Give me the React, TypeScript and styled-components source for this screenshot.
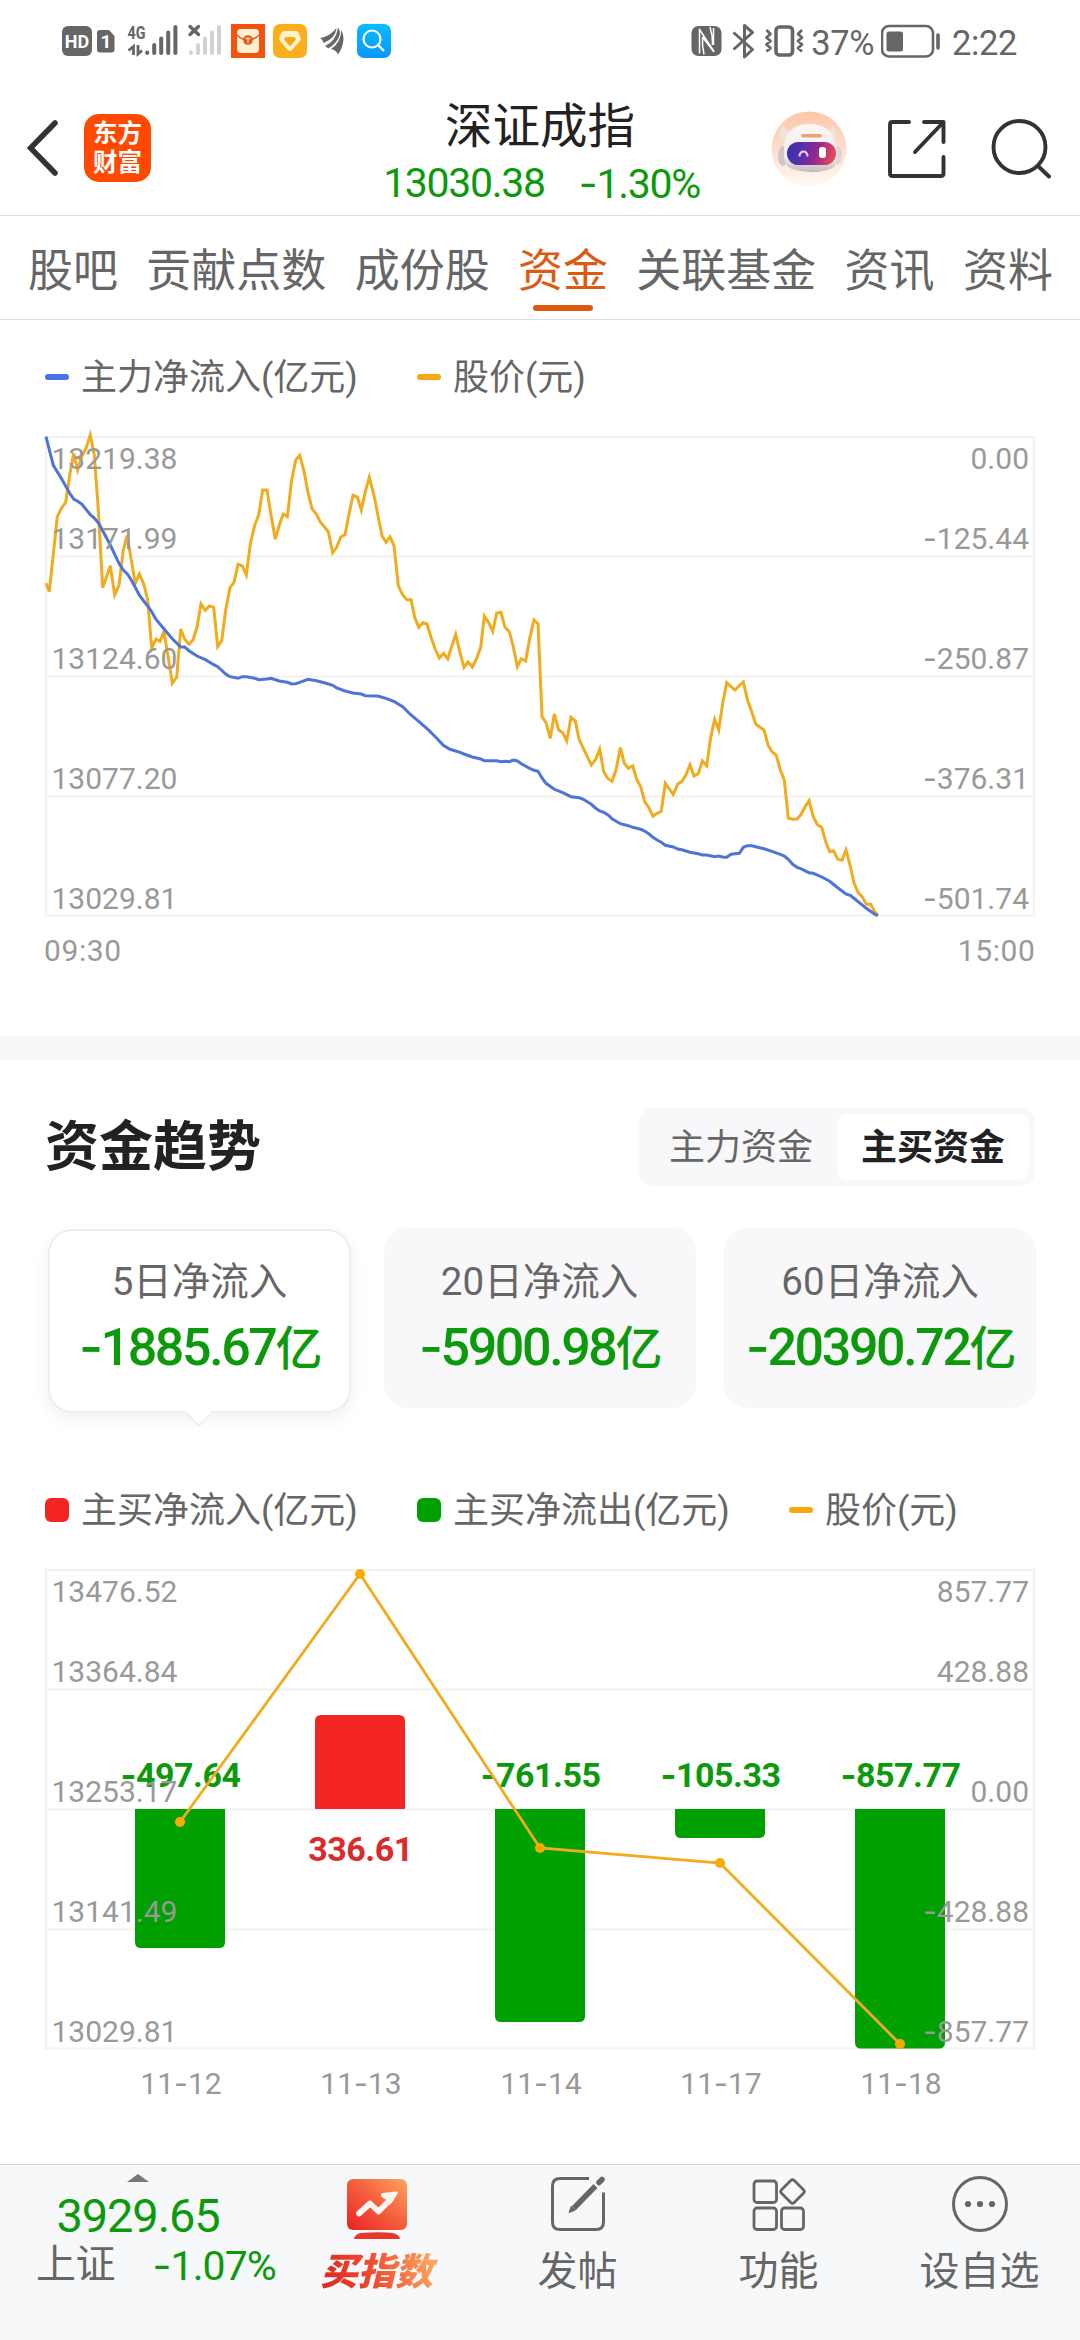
import React from 'react';
import styled, { createGlobalStyle } from 'styled-components';

const FONT = `Roboto, 'Noto Sans CJK SC', sans-serif`;

const GlobalStyle = createGlobalStyle`
  html, body { margin: 0; padding: 0; background: #fff; }
  body { font-family: ${FONT}; -webkit-font-smoothing: antialiased; }
  * { box-sizing: border-box; }
  svg { display: block; flex: none; }
`;

const GREEN = '#0c9a0c';
const GRAY = '#666';

const Page = styled.div`
  width: 1080px;
  height: 2340px;
  display: flex;
  flex-direction: column;
  background: #fff;
  overflow: hidden;
`;

/* ---------- status bar ---------- */

const StatusBar = styled.div`
  height: 82px;
  flex: none;
  display: flex;
  justify-content: space-between;
  padding: 0 63px 0 62px;
  color: ${GRAY};
`;

const StatusGroup = styled.div`
  display: flex;
  align-items: center;
`;

const StatusText = styled.span<{ $left: number; $right: number }>`
  font-size: 34.5px;
  line-height: 40px;
  letter-spacing: -0.4px;
  margin: 3px ${p => p.$right}px 0 ${p => p.$left}px;
`;

/* ---------- header ---------- */

const Header = styled.header`
  height: 134px;
  flex: none;
  display: grid;
  grid-template-columns: 1fr auto 1fr;
  border-bottom: 1px solid #d9d9d9;
`;

const HeaderLeft = styled.div`
  display: flex;
  align-items: center;
  gap: 26px;
  padding: 0 0 0 27px;
  height: 132px;
`;

const HeaderRight = styled.div`
  display: flex;
  align-items: center;
  justify-content: flex-end;
  height: 133px;
  padding-right: 29px;
`;

const Spacer = styled.div<{ $w?: number; $h?: number }>`
  width: ${p => p.$w ?? 0}px;
  height: ${p => p.$h ?? 0}px;
  flex: none;
`;

const Logo = styled.div`
  width: 67px;
  height: 68px;
  border-radius: 15px;
  background: #ff4800;
  color: #fff;
  display: flex;
  flex-direction: column;
  justify-content: center;
  align-items: center;
  font-size: 24.5px;
  font-weight: 700;
  line-height: 29px;
`;

const Quote = styled.div`
  display: flex;
  flex-direction: column;
  align-items: center;
  padding-top: 15px;
`;

const QuoteName = styled.h1`
  margin: 0;
  font-size: 47.5px;
  font-weight: 400;
  line-height: 60px;
  color: #222;
`;

const QuoteFigures = styled.div`
  display: flex;
  gap: 34px;
  padding-left: 3px;
  font-size: 41px;
  line-height: 52px;
  letter-spacing: -1.3px;
  color: ${GREEN};
`;

const Dash = styled.span`
  font-family: Inter, sans-serif;
`;

/* ---------- tabs ---------- */

const Tabs = styled.nav`
  height: 104px;
  flex: none;
  display: flex;
  gap: 28.3px;
  padding-left: 28px;
  border-bottom: 1px solid #d9d9d9;
`;

const Tab = styled.span<{ $active?: boolean }>`
  display: flex;
  flex-direction: column;
  align-items: center;
  padding-top: 26px;
  font-size: 45px;
  line-height: 60px;
  white-space: nowrap;
  color: ${p => (p.$active ? '#dc5a12' : GRAY)};
`;

const TabMark = styled.i`
  width: 60px;
  height: 6px;
  margin-top: 3px;
  border-radius: 3px;
  background: #dc5a12;
`;

/* ---------- legends ---------- */

const Legend = styled.div<{ $top: number; $bottom: number }>`
  flex: none;
  display: flex;
  padding: ${p => p.$top}px 0 ${p => p.$bottom}px 45px;
  height: ${p => p.$top + p.$bottom + 48}px;
`;

const LegendItem = styled.div<{ $w?: number }>`
  width: ${p => (p.$w ? p.$w + 'px' : 'auto')};
  display: flex;
  align-items: center;
  gap: 12px;
  font-size: 36px;
  line-height: 48px;
  color: ${GRAY};
  white-space: nowrap;
`;

const LegendMark = styled.i<{ $color: string; $square?: boolean }>`
  width: 24px;
  height: ${p => (p.$square ? 24 : 6)}px;
  margin-top: -2px;
  border-radius: ${p => (p.$square ? 6 : 3)}px;
  background: ${p => p.$color};
`;

const Divider = styled.div`
  height: 24px;
  flex: none;
  background: #f7f8fa;
`;

/* ---------- charts ---------- */

const Chart = styled.svg`
  text {
    font-family: ${FONT};
    font-size: 30px;
    fill: #999;
  }
  text.time {
    letter-spacing: 0.6px;
  }
  text.value {
    font-size: 34px;
    font-weight: 700;
    letter-spacing: -0.5px;
  }
  text tspan.dash {
    font-family: Inter, sans-serif;
  }
`;

/* ---------- trend section ---------- */

const SectionHead = styled.div`
  height: 78px;
  flex: none;
  margin: 48px 45px 0 45px;
  display: flex;
  align-items: center;
  justify-content: space-between;
`;

const SectionTitle = styled.h2`
  margin: 1px 0 0;
  font-size: 54px;
  font-weight: 700;
  line-height: 70px;
  color: #222;
`;

const Segmented = styled.div`
  width: 396px;
  height: 78px;
  padding: 6px;
  display: flex;
  border-radius: 14px;
  background: #f8f8fb;
`;

const Segment = styled.span<{ $active?: boolean }>`
  flex: 1;
  display: flex;
  align-items: center;
  justify-content: center;
  padding-top: 2px;
  border-radius: 10px;
  font-size: 36px;
  line-height: 48px;
  font-weight: ${p => (p.$active ? 700 : 400)};
  color: ${p => (p.$active ? '#222' : GRAY)};
  background: ${p => (p.$active ? '#fff' : 'transparent')};
`;

const Cards = styled.div`
  flex: none;
  height: 215px;
  margin: 42px 44px 0 45px;
  display: flex;
  justify-content: space-between;
  align-items: flex-start;
`;

const Card = styled.div<{ $active?: boolean }>`
  position: relative;
  width: ${p => (p.$active ? 303 : 312)}px;
  height: ${p => (p.$active ? 184 : 180)}px;
  margin: ${p => (p.$active ? '1px 4px 0 3px' : '0')};
  border: ${p => (p.$active ? '2px solid #eee' : '0 solid transparent')};
  border-radius: 24px;
  background: ${p => (p.$active ? '#fff' : '#f8f8fb')};
  box-shadow: ${p => (p.$active ? '0 6px 18px rgba(0, 0, 0, 0.06)' : 'none')};
  display: flex;
  flex-direction: column;
  align-items: center;
  padding-top: ${p => (p.$active ? 27 : 30)}px;
`;

const CardLabel = styled.span`
  font-size: 38.5px;
  line-height: 48px;
  color: ${GRAY};
`;

const CardValue = styled.span`
  margin-top: 11px;
  font-size: 52px;
  line-height: 60px;
  font-weight: 500;
  letter-spacing: -2.4px;
  color: ${GREEN};
  white-space: nowrap;
`;

const CardUnit = styled.span`
  font-size: 47px;
`;

const Pointer = styled.i`
  position: absolute;
  left: 50%;
  bottom: -12px;
  width: 20px;
  height: 20px;
  margin-left: -11px;
  background: #fff;
  border: solid #eee;
  border-width: 0 2px 2px 0;
  transform: rotate(45deg);
`;

/* ---------- bottom bar ---------- */

const BottomBar = styled.footer`
  margin-top: auto;
  height: 176px;
  flex: none;
  display: flex;
  background: #f7f8fa;
  border-top: 1px solid #d5d3dc;
  color: ${GRAY};
`;

const IndexBox = styled.div`
  width: 276px;
  display: flex;
  flex-direction: column;
  align-items: center;
  padding: 9px 0 0 0;
`;

const IndexValue = styled.span`
  margin-top: 7px;
  font-size: 47px;
  line-height: 54px;
  letter-spacing: -1.1px;
  color: ${GREEN};
`;

const IndexRow = styled.div`
  align-self: stretch;
  display: flex;
  justify-content: space-between;
  padding: 0 0 0 36px;
  margin-top: -2px;
  font-size: 40px;
  line-height: 48px;
  letter-spacing: -0.5px;
`;

const IndexChange = styled.span`
  color: ${GREEN};
  font-size: 41px;
  letter-spacing: -0.9px;
`;

const NavItem = styled.div`
  width: 201px;
  display: flex;
  flex-direction: column;
  align-items: center;
  padding-top: 9px;
`;

const NavText = styled.span`
  margin-top: 16px;
  font-size: 40px;
  line-height: 48px;
`;

const BuyText = styled.span`
  margin-top: 7px;
  padding: 0 6px;
  font-size: 37.5px;
  line-height: 50px;
  font-weight: 900;
  font-style: italic;
  background: linear-gradient(75deg, #e0251f 8%, #f0472f 45%, #fba45c 92%);
  -webkit-background-clip: text;
  background-clip: text;
  color: transparent;
`;

/* ---------- data ---------- */

/* Intraday samples as x,y pairs in thirds of a pixel from the plot origin. */
const priceAm = [48,490,58,515,82,290,95,263,107,247,120,160,131,100,143,150,157,105,168,85,181,45,193,105,205,270,218,503,241,437,254,525,267,495,280,390,291,347,303,415,316,490,328,462,341,492,353,540,365,685,378,657,390,664,402,635,415,715,427,790,440,772,452,627,464,658,477,673,489,660,501,622,513,552,526,571,538,558,551,562,563,680,575,662,587,570,600,503,612,487,624,433,637,438,649,465,661,372,674,316,686,285,698,210,711,210,723,285,736,358,748,315,760,282,772,290,785,180,797,120,809,106,822,153,834,218,846,266,859,282,871,306,883,320,895,335,908,398,920,382,932,351,945,344,957,283,969,226,982,231,994,270,1006,215,1018,172,1031,222,1043,283,1056,347,1068,367,1080,350,1092,377,1105,497,1117,523,1130,539,1143,539,1154,592,1166,622,1179,608,1191,612,1204,655,1216,688,1228,714,1241,700,1253,717];
const pricePm = [0,695,17,643,30,698,42,742,54,726,67,741,79,718,92,682,103,588,116,608,128,634,140,579,153,577,165,622,178,635,190,680,202,740,214,716,227,723,239,655,252,600,264,611,276,890,288,908,301,955,313,882,326,930,338,938,350,963,363,892,376,903,387,957,400,985,412,1010,424,1035,437,1018,449,988,461,1055,474,1076,486,1084,498,1050,511,983,523,1030,535,1045,548,1038,560,1078,572,1100,584,1145,597,1164,609,1189,621,1180,634,1174,646,1090,658,1107,670,1124,683,1092,696,1084,708,1064,720,1034,732,1068,745,1061,757,1023,770,1037,782,952,794,898,806,930,818,850,830,788,843,800,855,810,868,797,880,786,893,842,905,875,917,912,929,921,942,930,954,975,966,995,979,1006,991,1050,1003,1080,1015,1195,1028,1198,1041,1197,1052,1185,1065,1161,1077,1142,1090,1190,1102,1214,1115,1222,1127,1265,1139,1295,1151,1292,1163,1318,1176,1321,1188,1290,1200,1335,1213,1392,1225,1418,1237,1431,1249,1453,1262,1453,1274,1475,1284,1486];
const flowAm = [48,50,70,136,95,177,119,220,131,237,143,244,156,253,181,284,193,294,206,310,218,332,241,375,267,430,279,449,292,462,304,480,328,525,341,543,353,558,365,575,377,597,402,627,427,656,452,681,464,681,477,692,501,708,526,719,551,734,563,740,587,762,600,770,624,775,637,770,649,770,674,775,686,779,711,777,723,775,748,783,772,787,785,792,797,791,809,787,834,778,859,782,883,788,908,796,920,804,945,813,969,819,994,822,1006,827,1043,828,1068,835,1093,845,1118,860,1142,884,1167,905,1191,926,1216,950,1240,976];
const flowPm = [0,988,30,997,42,1002,67,1011,92,1017,103,1022,140,1022,153,1025,165,1024,178,1025,190,1020,202,1023,214,1031,239,1045,252,1051,264,1054,276,1074,288,1090,313,1108,338,1118,363,1130,388,1133,400,1138,424,1153,437,1165,449,1173,461,1177,474,1185,486,1196,511,1211,535,1217,548,1222,572,1228,584,1233,597,1242,609,1252,621,1260,634,1267,646,1276,670,1281,683,1287,696,1289,720,1297,745,1301,757,1305,770,1305,794,1310,806,1308,818,1311,830,1312,843,1303,868,1300,880,1282,892,1277,905,1277,929,1283,942,1286,966,1294,991,1303,1003,1308,1015,1318,1028,1333,1041,1342,1052,1346,1077,1358,1090,1360,1115,1371,1139,1384,1163,1403,1188,1422,1202,1427,1225,1445,1249,1465,1274,1483,1284,1487];

const toPoints = (am: number[], pm: number[]) => {
  const out: string[] = [];
  for (let i = 0; i < am.length; i += 2) out.push(`${(30 + am[i] / 3).toFixed(1)},${(am[i + 1] / 3).toFixed(1)}`);
  for (let i = 0; i < pm.length; i += 2) out.push(`${(450 + pm[i] / 3).toFixed(1)},${(pm[i + 1] / 3).toFixed(1)}`);
  return out.join(' ');
};

const tabs = ['股吧', '贡献点数', '成份股', '资金', '关联基金', '资讯', '资料'];

const cards = [
  { label: '5日净流入', value: '-1885.67', active: true },
  { label: '20日净流入', value: '-5900.98' },
  { label: '60日净流入', value: '-20390.72' },
];

const days = [
  { date: '11-12', value: '-497.64', bar: 139, price: 253 },
  { date: '11-13', value: '336.61', bar: -94, price: 5 },
  { date: '11-14', value: '-761.55', bar: 213, price: 279 },
  { date: '11-17', value: '-105.33', bar: 29, price: 294 },
  { date: '11-18', value: '-857.77', bar: 239.5, price: 475 },
];

/* ---------- parts ---------- */

const Num = ({ children }: { children: string }) => (
  <>{children.split(/(-)/).map((s, i) => (s === '-' ? <Dash key={i}>-</Dash> : s))}</>
);

const svgNum = (s: string) =>
  s.split(/(-)/).map((t, i) => (t === '-' ? <tspan key={i} className="dash">-</tspan> : t));

const Axes = ({ top, left, right }: { top: number; left: string[]; right: string[] }) => (
  <>
    {[32, 112, 232, 352, 472].map((dy, i) => (
      <React.Fragment key={dy}>
        <text x={51.5} y={top + dy}>{left[i]}</text>
        <text x={1029} y={top + dy} textAnchor="end">{svgNum(right[i])}</text>
      </React.Fragment>
    ))}
  </>
);

const Grid = ({ top }: { top: number }) => (
  <g stroke="#f1f1f1" strokeWidth={2} fill="none">
    <rect x={46} y={top} width={988} height={478.5} />
    {[119.5, 239.5, 359.5].map(dy => (
      <line key={dy} x1={46} x2={1034} y1={top + dy} y2={top + dy} />
    ))}
  </g>
);

const IntradayChart = () => (
  <Chart width={1080} height={560} viewBox="0 0 1080 560">
    <Grid top={17} />
    <g fill="none" strokeWidth={3} strokeLinejoin="miter">
      <polyline points={toPoints(priceAm, pricePm)} stroke="#f0ab1e" />
      <polyline points={toPoints(flowAm, flowPm)} stroke="#4d74d6" />
    </g>
    <Axes
      top={17}
      left={['13219.38', '13171.99', '13124.60', '13077.20', '13029.81']}
      right={['0.00', '-125.44', '-250.87', '-376.31', '-501.74']}
    />
    <text className="time" x={44} y={541}>09:30</text>
    <text className="time" x={1035.5} y={541} textAnchor="end">15:00</text>
  </Chart>
);

const barPath = (x: number, h: number) => {
  const s = Math.sign(h);
  const y = 240 + h;
  return `M${x - 45} 240V${y - 6 * s}Q${x - 45} ${y} ${x - 39} ${y}H${x + 39}Q${x + 45} ${y} ${x + 45} ${y - 6 * s}V240Z`;
};

const TrendChart = () => (
  <Chart width={1080} height={550} viewBox="0 0 1080 550">
    <Grid top={1} />
    {days.map((d, i) => (
      <path key={d.date} d={barPath(180 + i * 180, d.bar)} fill={d.bar > 0 ? '#00a000' : '#f32424'} />
    ))}
    {days.map((d, i) => (
      <text
        key={d.date}
        className="value"
        x={180.5 + i * 180}
        y={d.bar > 0 ? 217.5 : 291.5}
        textAnchor="middle"
        style={{ fill: d.bar > 0 ? GREEN : '#dc2a2a' }}
      >
        {svgNum(d.value)}
      </text>
    ))}
    <polyline points={days.map((d, i) => `${180 + i * 180},${d.price}`).join(' ')} fill="none" stroke="#f0ab1e" strokeWidth={2.8} />
    {days.map((d, i) => (
      <circle key={d.date} cx={180 + i * 180} cy={d.price} r={5} fill="#fda904" />
    ))}
    <Axes
      top={1}
      left={['13476.52', '13364.84', '13253.17', '13141.49', '13029.81']}
      right={['857.77', '428.88', '0.00', '-428.88', '-857.77']}
    />
    {days.map((d, i) => (
      <text key={d.date} x={181 + i * 180} y={524.5} textAnchor="middle">{svgNum(d.date)}</text>
    ))}
  </Chart>
);

const StatusLeftIcons = () => (
  <svg width={332} height={40} viewBox="62 21 332 40">
    <rect x={62} y={26} width={30} height={30} rx={6} fill="#666" />
    <text x={77} y={48} textAnchor="middle" fontFamily="Roboto, sans-serif" fontWeight={700} fontSize={18} fill="#fff">HD</text>
    <path d="M100 30h9l5.500 6v13.500q0 3-3 3h-11.500q-3 0-3-3v-16.500q0-3 3-3z" fill="#666" />
    <text x={106} y={48} textAnchor="middle" fontFamily="Roboto, sans-serif" fontWeight={700} fontSize={19} fill="#fff">1</text>
    <text x={127.500} y={38.500} fontFamily="Roboto, sans-serif" fontWeight={700} fontSize={18.500} fill="#666" textLength={18} lengthAdjust="spacingAndGlyphs">4G</text>
    <g stroke="#666" strokeWidth={2.800} fill="none">
      <path d="M133.500 55V46.500L128.500 50.500M138 45V54L142 50.500" />
    </g>
    <g stroke="#666" strokeWidth={4} strokeLinecap="round">
      <path d="M147.200 52.500v.5M154.200 45v8M161.200 38.500v14.500M168.200 32.500v20.500M175.400 27v26" />
    </g>
    <path d="M190 26.500l8.500 8M198.500 26.500l-8.500 8" stroke="#666" strokeWidth={3.400} strokeLinecap="round" />
    <g stroke="#d2d2d2" strokeWidth={4} strokeLinecap="round">
      <path d="M191 52v1M198 45v8M205 38.500v14.500M212 32.500v20.500M219 27v26" />
    </g>
    <rect x={231} y={24} width={34} height={34} fill="#f2540c" />
    <rect x={237} y={29} width={22} height={24} rx={4} fill="#fff0cf" />
    <path d="M237 35q5 5 11 5t11-5" stroke="#e55a1a" strokeWidth={1.600} fill="none" />
    <circle cx={248} cy={40} r={4.800} fill="#e5551a" />
    <path d="M245.500 38.500h5M248 38.500v4.500" stroke="#ffe0b0" strokeWidth={1.300} />
    <rect x={273} y={24} width={34} height={34} rx={7} fill="#fcae1c" />
    <path d="M284 31h12q1.500 0 2.500 1.500l2 5q.7 2-.5 3.500l-8 9q-2 1.800-4 0l-8-9q-1.200-1.500-.5-3.500l2-5q1-1.500 2.500-1.500z" fill="#fff3cf" />
    <path d="M285.500 37h9l1.500 2.500-6 7-6-7z" fill="#f8a81d" />
    <g fill="#666">
      <path d="M320 38q10-1.500 16.500-10-1 10.500-13 15-1-4-3.500-5z" />
      <path d="M325 46q11-4.500 13-18.500 2 2.500 2 6-2 9.500-12 15-1-2-3-2.500z" />
      <path d="M331 49q9.500-6 10.500-19 2 4.500 2 9.500-1 9-5.500 15-1.500-4.500-7-5.500z" />
    </g>
    <defs>
      <linearGradient id="sb" x1="0" y1="0" x2="0" y2="1">
        <stop offset="0" stopColor="#06bdff" />
        <stop offset="1" stopColor="#0a97fb" />
      </linearGradient>
    </defs>
    <rect x={357} y={24} width={34} height={34} rx={7} fill="url(#sb)" />
    <circle cx={372} cy={39} r={8.500} fill="none" stroke="#fff" strokeWidth={2.200} />
    <path d="M378.500 45.500l5.500 5.500" stroke="#fff" strokeWidth={2.400} />
  </svg>
);

const StatusRightIcons = () => (
  <svg width={114} height={40} viewBox="690 20 114 40">
    <rect x={690.500} y={25} width={30} height={30} rx={7} fill="#666" />
    <path d="M698.500 27.500V52.500M701.500 36q-.5 9 1.500 17.500M698.500 28.500L713 50.500M701.500 36l11.500 15M712.500 27v17M709 26q3 9 2.500 18" stroke="#fff" strokeWidth={1.500} fill="none" />
    <path d="M732.500 31.500l19 17-8 7.500v-31.500l8 7-19 17" stroke="#666" strokeWidth={3} fill="none" strokeLinejoin="round" />
    <rect x={775} y={26} width={16.500} height={28} rx={3.500} stroke="#666" strokeWidth={3.600} fill="none" />
    <path d="M765.500 29l4 4-4 3.500 4 3.500-4 3.500 4 3.500-4 3.500M801 29l-4 4 4 3.500-4 3.500 4 3.500-4 3.500 4 3.500" stroke="#666" strokeWidth={2.800} fill="none" strokeLinejoin="round" />
  </svg>
);

const Battery = () => (
  <svg width={60} height={34} viewBox="881 23 60 34">
    <rect x={882} y={25} width={51} height={30.500} rx={7} stroke="#666" strokeWidth={2.600} fill="none" />
    <rect x={886.500} y={30.500} width={16.500} height={20} rx={2.500} fill="#666" />
    <path d="M938 34v13" stroke="#666" strokeWidth={3.600} strokeLinecap="round" />
  </svg>
);

const Robot = () => (
  <svg width={76} height={76} viewBox="0 0 76 76">
    <defs>
      <linearGradient id="rbg" x1="0" y1="0" x2="0" y2="1">
        <stop offset="0" stopColor="#fdc7a8" />
        <stop offset="0.6" stopColor="#fee3d5" />
        <stop offset="1" stopColor="#fff9f6" />
      </linearGradient>
      <linearGradient id="rhead" x1="0" y1="0" x2="0" y2="1">
        <stop offset="0" stopColor="#fbf7f5" />
        <stop offset="0.7" stopColor="#f0ebea" />
        <stop offset="1" stopColor="#c0b9bb" />
      </linearGradient>
      <linearGradient id="rvis" x1="0" y1="0" x2="1" y2="0.15">
        <stop offset="0" stopColor="#2f2fa8" />
        <stop offset="0.35" stopColor="#5a2fae" />
        <stop offset="0.65" stopColor="#93288a" />
        <stop offset="1" stopColor="#e0475c" />
      </linearGradient>
    </defs>
    <circle cx={38} cy={38} r={37.500} fill="url(#rbg)" />
    <path d="M12 14q-6 7-2 14 3 3 8 1l5-8q-9 0-11-7zM62 14q4 7 2 12-2 4-7 3l-4-8q7 1 9-7z" fill="#efe3de" />
    <ellipse cx={12} cy={45} rx={5} ry={10} fill="#cfc6c6" />
    <ellipse cx={66.500} cy={44} rx={4.500} ry={9} fill="#ddd4d3" />
    <path d="M13 38q1-25 26-25 24 0 26 24l1 13q-2 8-10 9-17 5-35-1-8-3-8-12z" fill="url(#rhead)" />
    <rect x={30} y={23} width={21} height={3.400} rx={1.700} fill="#e0a877" />
    <rect x={16} y={31} width={49} height={23} rx={11.500} fill="url(#rvis)" />
    <path d="M28.500 44.500q1-4 4-4t4 4" stroke="#e6dcff" strokeWidth={2.200} fill="none" strokeLinecap="round" />
    <rect x={48} y={36} width={7} height={11} rx={3} fill="#fff" />
  </svg>
);

const ShareIcon = () => (
  <svg width={60} height={60} viewBox="0 0 60 60" fill="none" stroke="#333" strokeWidth={3.900} strokeLinecap="round" strokeLinejoin="round">
    <path d="M22 3H5.500Q3 3 3 5.500V54.500Q3 57 5.500 57H54Q56.500 57 56.500 54.500V38M37 3H56.500V23M56.500 3L28 33" />
  </svg>
);

const SearchIcon = () => (
  <svg width={60} height={60} viewBox="0 0 60 60" fill="none" stroke="#333" strokeWidth={3.900} strokeLinecap="round">
    <circle cx={28.500} cy={28} r={26} />
    <path d="M47 47L58 57.500" />
  </svg>
);

const BuyIcon = () => (
  <svg width={60} height={62} viewBox="0 0 60 62">
    <defs>
      <linearGradient id="buy" x1="0" y1="1" x2="1" y2="0">
        <stop offset="0" stopColor="#ea2222" />
        <stop offset="0.5" stopColor="#f45d3c" />
        <stop offset="1" stopColor="#ffa45c" />
      </linearGradient>
    </defs>
    <rect x={0} y={1} width={60} height={51} rx={6} fill="url(#buy)" />
    <path d="M7 61q0-3.500 6-6 20-1.500 33 0 7 2 7 6z" fill="#e5382d" />
    <path d="M12 35.500L23 25.500L31.500 33.500L44 21" stroke="#fff6f2" strokeWidth={5.800} fill="none" strokeLinecap="round" strokeLinejoin="round" />
    <path d="M35 15L49 13.500q2.500 0 1.500 2.500L43 27l-4-5.500-3-1.500q-3.500-2.500-1-5z" fill="#fff6f2" />
  </svg>
);

const PostIcon = () => (
  <svg width={56} height={58} viewBox="0 0 56 58" fill="none" stroke="#666">
    <path d="M39 4.500H10Q2.500 4.500 2.500 12V48Q2.500 55.500 10 55.500H46Q53.500 55.500 53.500 48V18.500" strokeWidth={3} />
    <path d="M45.500 12L24 34" strokeWidth={5.500} />
    <path d="M19 38.500l2.500-6.500 4 4z" fill="#666" strokeWidth={1} />
    <path d="M49 8.500L52 5.500" strokeWidth={5.500} strokeLinecap="round" />
  </svg>
);

const GridIcon = () => (
  <svg width={56} height={58} viewBox="0 0 56 58" fill="none" stroke="#666" strokeWidth={2.800}>
    <rect x={3} y={7} width={22.500} height={21.500} rx={3} />
    <rect x={3} y={34} width={22.500} height={21.500} rx={3} />
    <rect x={30.500} y={34} width={22} height={21.500} rx={3} />
    <rect x={32.500} y={8.500} width={18} height={18} rx={2.500} transform="rotate(45 41.500 17.500)" />
  </svg>
);

const MoreIcon = () => (
  <svg width={58} height={58} viewBox="0 0 58 58" fill="none" stroke="#666" strokeWidth={3}>
    <circle cx={29} cy={30} r={26.500} />
    <g fill="#666" stroke="none">
      <circle cx={17} cy={30} r={3.100} />
      <circle cx={29} cy={30} r={3.100} />
      <circle cx={41} cy={30} r={3.100} />
    </g>
  </svg>
);

export default function App() {
  return (
    <Page>
      <GlobalStyle />
      <StatusBar>
        <StatusGroup><StatusLeftIcons /></StatusGroup>
        <StatusGroup>
          <StatusRightIcons />
          <StatusText $left={6} $right={7}>37%</StatusText>
          <Battery />
          <StatusText $left={11} $right={0}>2:22</StatusText>
        </StatusGroup>
      </StatusBar>

      <Header>
        <HeaderLeft>
          <svg width={31} height={56} viewBox="0 0 31 56" fill="none" stroke="#333" strokeWidth={5.500} strokeLinecap="round">
            <path d="M28 3L3.500 28L28 53" />
          </svg>
          <Logo><span>东方</span><span>财富</span></Logo>
        </HeaderLeft>
        <Quote>
          <QuoteName>深证成指</QuoteName>
          <QuoteFigures>
            <span>13030.38</span>
            <span><Num>-1.30%</Num></span>
          </QuoteFigures>
        </Quote>
        <HeaderRight>
          <Robot />
          <Spacer $w={40} />
          <ShareIcon />
          <Spacer $w={44} />
          <SearchIcon />
        </HeaderRight>
      </Header>

      <Tabs>
        {tabs.map(t => (
          <Tab key={t} $active={t === '资金'}>
            {t}
            {t === '资金' && <TabMark />}
          </Tab>
        ))}
      </Tabs>

      <Legend $top={34} $bottom={18}>
        <LegendItem $w={372}><LegendMark $color="#4a73e8" />主力净流入(亿元)</LegendItem>
        <LegendItem><LegendMark $color="#f5a80f" />股价(元)</LegendItem>
      </Legend>
      <IntradayChart />
      <Spacer $h={56} />
      <Divider />

      <SectionHead>
        <SectionTitle>资金趋势</SectionTitle>
        <Segmented>
          <Segment>主力资金</Segment>
          <Segment $active>主买资金</Segment>
        </Segmented>
      </SectionHead>

      <Cards>
        {cards.map(c => (
          <Card key={c.label} $active={c.active}>
            <CardLabel>{c.label}</CardLabel>
            <CardValue><Num>{c.value}</Num><CardUnit>亿</CardUnit></CardValue>
            {c.active && <Pointer />}
          </Card>
        ))}
      </Cards>

      <Legend $top={44} $bottom={34}>
        <LegendItem $w={372}><LegendMark $color="#f32424" $square />主买净流入(亿元)</LegendItem>
        <LegendItem $w={372}><LegendMark $color="#00a000" $square />主买净流出(亿元)</LegendItem>
        <LegendItem><LegendMark $color="#f5a80f" />股价(元)</LegendItem>
      </Legend>
      <TrendChart />

      <BottomBar>
        <IndexBox>
          <svg width={22} height={8} viewBox="0 0 22 8"><path d="M0 8L11 0L22 8Z" fill="#777" /></svg>
          <IndexValue>3929.65</IndexValue>
          <IndexRow>
            <span>上证</span>
            <IndexChange><Num>-1.07%</Num></IndexChange>
          </IndexRow>
        </IndexBox>
        <NavItem>
          <Spacer $h={4} />
          <BuyIcon />
          <BuyText>买指数</BuyText>
        </NavItem>
        <NavItem><PostIcon /><NavText>发帖</NavText></NavItem>
        <NavItem><GridIcon /><NavText>功能</NavText></NavItem>
        <NavItem><MoreIcon /><NavText>设自选</NavText></NavItem>
      </BottomBar>
    </Page>
  );
}
